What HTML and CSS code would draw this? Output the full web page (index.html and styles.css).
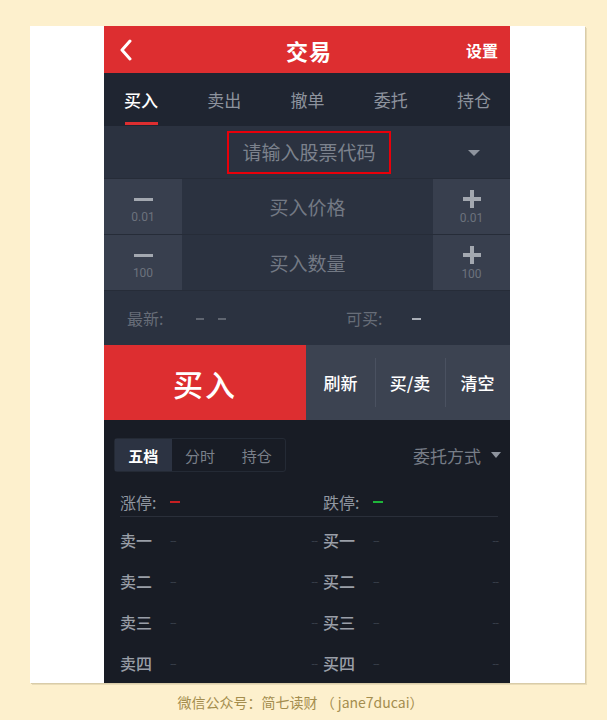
FILE: index.html
```html
<!DOCTYPE html>
<html lang="zh-CN">
<head>
<meta charset="utf-8">
<link rel="stylesheet" href="styles.css">
</head>
<body>
<div class="card">
  <div class="phone">
    <header class="topbar">
      <svg class="back" width="16" height="22" viewBox="0 0 16 22"><path d="M12 2 L4 11 L12 20" fill="none" stroke="#fff" stroke-width="3" stroke-linecap="round" stroke-linejoin="round"/></svg>
      <div class="title">交易</div>
      <div class="setting">设置</div>
    </header>
    <nav class="tabs">
      <div class="tab active">买入</div>
      <div class="tab">卖出</div>
      <div class="tab">撤单</div>
      <div class="tab">委托</div>
      <div class="tab">持仓</div>
    </nav>
    <div class="code-row">
      <div class="code-box">请输入股票代码</div>
      <span class="tri"></span>
    </div>
    <div class="step-row">
      <div class="step-btn"><span class="minus"></span><span class="step-val">0.01</span></div>
      <div class="step-field">买入价格</div>
      <div class="step-btn"><span class="plus"></span><span class="step-val">0.01</span></div>
    </div>
    <div class="step-row">
      <div class="step-btn"><span class="minus"></span><span class="step-val">100</span></div>
      <div class="step-field">买入数量</div>
      <div class="step-btn"><span class="plus"></span><span class="step-val">100</span></div>
    </div>
    <div class="info-row">
      <div class="info-item"><span class="info-label">最新:</span><span class="idash"></span><span class="idash"></span></div>
      <div class="info-item right"><span class="info-label">可买:</span><span class="idash bright"></span></div>
    </div>
    <div class="action-row">
      <div class="buy-btn">买入</div>
      <div class="act act1">刷新</div>
      <div class="act act2">买/卖</div>
      <div class="act act3">清空</div>
    </div>
    <div class="lower">
      <div class="seg-row">
        <div class="seg">
          <div class="seg-item on">五档</div>
          <div class="seg-item">分时</div>
          <div class="seg-item">持仓</div>
        </div>
        <div class="mode">委托方式<span class="tri small"></span></div>
      </div>
      <div class="limit-row">
        <div class="limit"><span class="lab">涨停:</span><span class="dash red"></span></div>
        <div class="limit"><span class="lab">跌停:</span><span class="dash green"></span></div>
      </div>
      <div class="book">
        <div class="book-row"><div class="half"><span class="lvl">卖一</span><span class="d">--</span><span class="d end">--</span></div><div class="half"><span class="lvl">买一</span><span class="d">--</span><span class="d end">--</span></div></div>
        <div class="book-row"><div class="half"><span class="lvl">卖二</span><span class="d">--</span><span class="d end">--</span></div><div class="half"><span class="lvl">买二</span><span class="d">--</span><span class="d end">--</span></div></div>
        <div class="book-row"><div class="half"><span class="lvl">卖三</span><span class="d">--</span><span class="d end">--</span></div><div class="half"><span class="lvl">买三</span><span class="d">--</span><span class="d end">--</span></div></div>
        <div class="book-row"><div class="half"><span class="lvl">卖四</span><span class="d">--</span><span class="d end">--</span></div><div class="half"><span class="lvl">买四</span><span class="d">--</span><span class="d end">--</span></div></div>
      </div>
    </div>
  </div>
</div>
<div class="caption">微信公众号：简七读财 （ jane7ducai）</div>
</body>
</html>
```
FILE: styles.css
```css
* { box-sizing: border-box; }
html, body { margin: 0; padding: 0; }
body {
  width: 607px;
  height: 720px;
  background: #fdf0cd;
  font-family: "Noto Sans CJK SC", "Noto Sans", sans-serif;
  padding-top: 26px;
  overflow: hidden;
}
.card {
  margin-left: 30px;
  width: 555px;
  height: 657px;
  background: #fff;
  box-shadow: 1px 1px 0 #d9cca9, 2px 2px 0 #e9dcb8;
  padding-left: 74px;
}
.phone {
  width: 406px;
  height: 657px;
  overflow: hidden;
  background: #181c25;
}
.topbar {
  height: 47px;
  background: #dd2e30;
  display: flex;
  align-items: center;
  padding: 0 12px 0 12px;
}
.back { margin-left: 2px; }
.title {
  flex: 1;
  text-align: center;
  color: #fff;
  font-size: 22px;
  font-weight: 700;
  letter-spacing: 1px;
  margin-left: 18px;
}
.setting {
  color: #fff;
  font-size: 16px;
  font-weight: 700;
}
.tabs {
  height: 53px;
  background: #1f2531;
  display: flex;
  justify-content: space-between;
  padding: 0 19px 0 20px;
}
.tab {
  font-size: 17px;
  color: #8d939d;
  line-height: 53px;
  position: relative;
}
.tab.active { color: #fff; font-weight: 500; }
.tab.active::after {
  content: "";
  position: absolute;
  left: 1px;
  right: 0;
  bottom: 1px;
  height: 3px;
  background: #dd2e30;
}
.code-row {
  height: 53px;
  background: #2b3240;
  display: flex;
  align-items: center;
  justify-content: center;
  position: relative;
  border-bottom: 1px solid #262c38;
}
.code-box {
  width: 164px;
  height: 43px;
  margin-left: 4px;
  border: 2px solid #e8000a;
  color: #7c828d;
  font-size: 19px;
  text-align: center;
  line-height: 38px;
}
.tri {
  position: absolute;
  right: 30px;
  top: 24px;
  width: 0;
  height: 0;
  border-left: 6px solid transparent;
  border-right: 6px solid transparent;
  border-top: 6px solid #8e949e;
}
.step-row {
  height: 56px;
  display: grid;
  grid-template-columns: 78px 1fr 77px;
  border-bottom: 1px solid #262c38;
}
.step-btn {
  background: #383f4e;
  display: flex;
  flex-direction: column;
  align-items: center;
  justify-content: center;
  gap: 3px;
}
.minus {
  width: 19px;
  height: 3px;
  margin: 8px 0 6px;
  background: #a3a8b0;
}
.plus {
  width: 18px;
  height: 18px;
  position: relative;
  margin-top: 1px;
}
.plus::before, .plus::after {
  content: "";
  position: absolute;
  background: #a3a8b0;
}
.plus::before { left: 0; right: 0; top: 7px; height: 4px; }
.plus::after { top: 0; bottom: 0; left: 7px; width: 4px; }
.step-val {
  font-family: "Roboto", "Noto Sans", sans-serif;
  font-size: 12px;
  color: #6c727d;
  line-height: 14px;
}
.step-field {
  background: #2b3240;
  color: #737984;
  font-size: 19px;
  display: flex;
  align-items: center;
  justify-content: center;
}
.info-row {
  height: 54px;
  background: #2b3240;
  display: flex;
  align-items: center;
  padding-left: 23px;
}
.info-item { width: 219px; display: flex; align-items: center; }
.info-item.right { width: auto; }
.info-label { color: #676d78; font-size: 16px; width: 69px; }
.idash { width: 8px; height: 2px; background: #5f6570; margin-right: 14px; margin-top: 2px; }
.idash.bright { background: #a9aeb6; width: 9px; margin-left: -3px; }
.action-row {
  height: 75px;
  display: flex;
}
.buy-btn {
  width: 202px;
  background: #dd2e30;
  color: #fff;
  font-size: 30px;
  font-weight: 500;
  display: flex;
  align-items: center;
  justify-content: center;
  letter-spacing: 2px;
}
.act {
  background: #3c4351;
  color: #fff;
  font-size: 17px;
  font-weight: 500;
  display: flex;
  align-items: center;
  justify-content: center;
  position: relative;
}
.act1 { width: 69px; }
.act2 { width: 70px; }
.act3 { width: 65px; }
.act2::before, .act3::before {
  content: "";
  position: absolute;
  left: 0;
  top: 13px;
  bottom: 13px;
  width: 1px;
  background: #4a5160;
}
.lower {
  background: #181c25;
  padding: 18px 9px 0 16px;
}
.seg-row {
  display: flex;
  align-items: center;
  justify-content: space-between;
  margin-left: -6px;
}
.seg {
  display: flex;
  border: 1px solid #242a35;
  border-radius: 3px;
  height: 34px;
  width: 172px;
}
.seg-item {
  width: 57px;
  font-size: 15px;
  color: #7a808a;
  display: flex;
  align-items: center;
  justify-content: center;
}
.seg-item.on {
  background: #2c3342;
  color: #fff;
  font-weight: 700;
}
.mode {
  color: #777d87;
  font-size: 17px;
  display: flex;
  align-items: center;
  gap: 10px;
}
.tri.small {
  position: static;
  border-left-width: 5px;
  border-right-width: 5px;
  border-top-width: 6px;
}
.limit-row {
  display: flex;
  height: 30px;
  align-items: center;
  margin-top: 15px;
  margin-right: 3px;
  border-bottom: 1px solid #2a2f3a;
}
.limit { width: 203px; flex-shrink: 0; display: flex; align-items: center; }
.limit + .limit { flex: 1; }
.lab { color: #9197a1; font-size: 16px; width: 50px; }
.dash { width: 10px; height: 2px; }
.dash.red { background: #c61f22; }
.dash.green { background: #1eb53a; }
.book { display: flex; flex-direction: column; margin-top: 2px; }
.book-row {
  height: 41px;
  display: flex;
  align-items: center;
}
.half {
  width: 203px;
  flex-shrink: 0;
  display: flex;
  align-items: center;
}
.half + .half { width: 175px; }
.lvl { color: #9a9fa8; font-size: 16px; font-weight: 500; width: 50px; }
.d { color: #3e444f; font-size: 11px; letter-spacing: -1px; }
.d.end { margin-left: auto; margin-right: 6px; }
.half + .half .d.end { margin-right: 0; }
.caption {
  text-align: center;
  color: #a48d4d;
  font-size: 14px;
  margin-top: 9px;
  padding-right: 6px;
}
```
